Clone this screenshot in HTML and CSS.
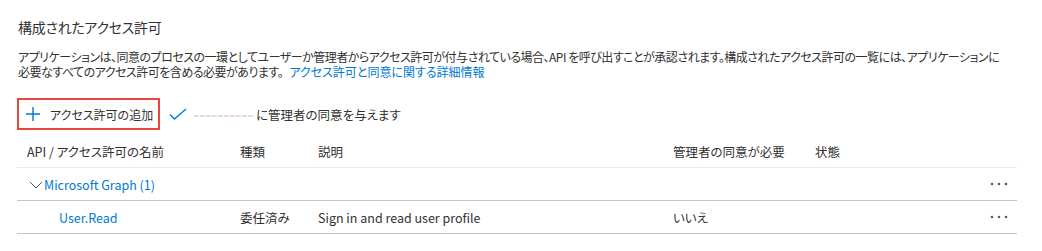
FILE: index.html
```html
<!DOCTYPE html>
<html lang="ja">
<head>
    <meta charset="UTF-8">
    <title>構成されたアクセス許可</title>
    <link rel="stylesheet" href="styles.css">
</head>
<body>
    <div class="panel">
        <h2 class="title">構成されたアクセス許可</h2>
        <p class="desc">アプリケーションは、同意のプロセスの一環としてユーザーか管理者からアクセス許可が付与されている場合、API を呼び出すことが承認されます。構成されたアクセス許可の一覧には、アプリケーションに必要なすべてのアクセス許可を含める必要があります。 <a href="#">アクセス許可と同意に関する詳細情報</a></p>

        <!-- Toolbar -->
        <div class="toolbar">
            <button class="btn btn-add">
                <svg class="icon" viewBox="0 0 16 16" width="16" height="16">
                    <path d="M8 1v14M1 8h14" stroke="#0078d4" stroke-width="1.4" fill="none"></path>
                </svg>
                <span>アクセス許可の追加</span>
            </button>
            <button class="btn btn-consent">
                <svg class="icon" viewBox="0 0 18 12" width="18" height="12">
                    <path d="M1 6.5l4.5 4.5L17 1" stroke="#0078d4" stroke-width="1.3" fill="none"></path>
                </svg>
                <span class="redacted"></span>
                <span>に管理者の同意を与えます</span>
            </button>
        </div>

        <!-- Permissions table -->
        <table class="perms">
            <thead>
                <tr>
                    <th class="col-name">API / アクセス許可の名前</th>
                    <th class="col-type">種類</th>
                    <th class="col-desc">説明</th>
                    <th class="col-admin">管理者の同意が必要</th>
                    <th class="col-status">状態</th>
                    <th class="col-more"></th>
                </tr>
            </thead>
            <tbody>
                <tr class="group">
                    <td colspan="5">
                        <a href="#" class="group-link">
                            <svg class="chevron" viewBox="0 0 14 8" width="14" height="8">
                                <path d="M1 1l6 6 6-6" stroke="#605e5c" stroke-width="1" fill="none"></path>
                            </svg>Microsoft Graph (1)
                        </a>
                    </td>
                    <td class="col-more">
                        <svg class="more" viewBox="0 0 18 4" width="18" height="4">
                            <circle cx="2" cy="2" r="1.3"></circle>
                            <circle cx="9" cy="2" r="1.3"></circle>
                            <circle cx="16" cy="2" r="1.3"></circle>
                        </svg>
                    </td>
                </tr>
                <tr class="item">
                    <td class="perm-name"><a href="#">User.Read</a></td>
                    <td>委任済み</td>
                    <td>Sign in and read user profile</td>
                    <td>いいえ</td>
                    <td></td>
                    <td class="col-more">
                        <svg class="more" viewBox="0 0 18 4" width="18" height="4">
                            <circle cx="2" cy="2" r="1.3"></circle>
                            <circle cx="9" cy="2" r="1.3"></circle>
                            <circle cx="16" cy="2" r="1.3"></circle>
                        </svg>
                    </td>
                </tr>
            </tbody>
        </table>
    </div>
</body>
</html>
```

FILE: styles.css
```css
/* General */
body {
    margin: 0;
    background: #fff;
    color: #323130;
    font-family: "Noto Sans CJK JP", "Noto Sans", sans-serif;
    font-feature-settings: "palt";
    font-size: 12px;
}

a {
    color: #0078d4;
    text-decoration: none;
}

.panel {
    padding: 17px 25px 0 17px;
}

.title {
    font-size: 14px;
    font-weight: 400;
    line-height: 20px;
    letter-spacing: -0.3px;
    margin: 0 0 0 1px;
}

.desc {
    margin: 12px 0 0 1px;
    line-height: 15px;
    letter-spacing: -0.5px;
    max-width: 990px;
}

.desc a {
    margin-left: 4px;
    letter-spacing: 0;
}

/* Toolbar */
.toolbar {
    display: flex;
    align-items: center;
    margin-top: 19px;
}

.btn {
    display: flex;
    align-items: center;
    height: 32px;
    padding: 0;
    border: 0;
    background: none;
    font: inherit;
    color: #323130;
    white-space: nowrap;
    cursor: pointer;
}

.btn-add {
    box-sizing: border-box;
    width: 143px;
    border: 2px solid #e8453c;
    padding-left: 6px;
}

.btn-add .icon {
    margin-right: 9px;
}

.btn-consent {
    margin-left: 9px;
    font-size: 12.5px;
}

.btn-consent .icon {
    margin-right: 7px;
}

.redacted {
    width: 60px;
    height: 2px;
    margin: 3px 2px 0 0;
    background: repeating-linear-gradient(90deg, #efd3e4 0 3px, #e3dfe6 3px 5px, #fff 5px 6px);
}

/* Table */
.perms {
    width: 1000px;
    border-collapse: collapse;
    margin-top: 5px;
    font-size: 12.5px;
}

.perms th,
.perms td {
    height: 32px;
    padding: 0 10px;
    text-align: left;
    white-space: nowrap;
}

.perms th {
    font-weight: 400;
    color: #323130;
    border-bottom: 1px solid #edebe9;
}

.perms td {
    border-bottom: 1px solid #c8c6c4;
}

.col-name { width: 193px; }
.col-type { width: 58px; }
.col-desc { width: 335px; }
.col-admin { width: 122px; }

.perms .col-more {
    text-align: right;
    padding-right: 9px;
}

.group td {
    padding-left: 12px;
}

.group-link {
    display: inline-flex;
    align-items: center;
}

.chevron {
    margin-right: 1px;
}

.perms .perm-name {
    padding-left: 42px;
}

.more {
    display: block;
    margin-left: auto;
    fill: #605e5c;
}
```
